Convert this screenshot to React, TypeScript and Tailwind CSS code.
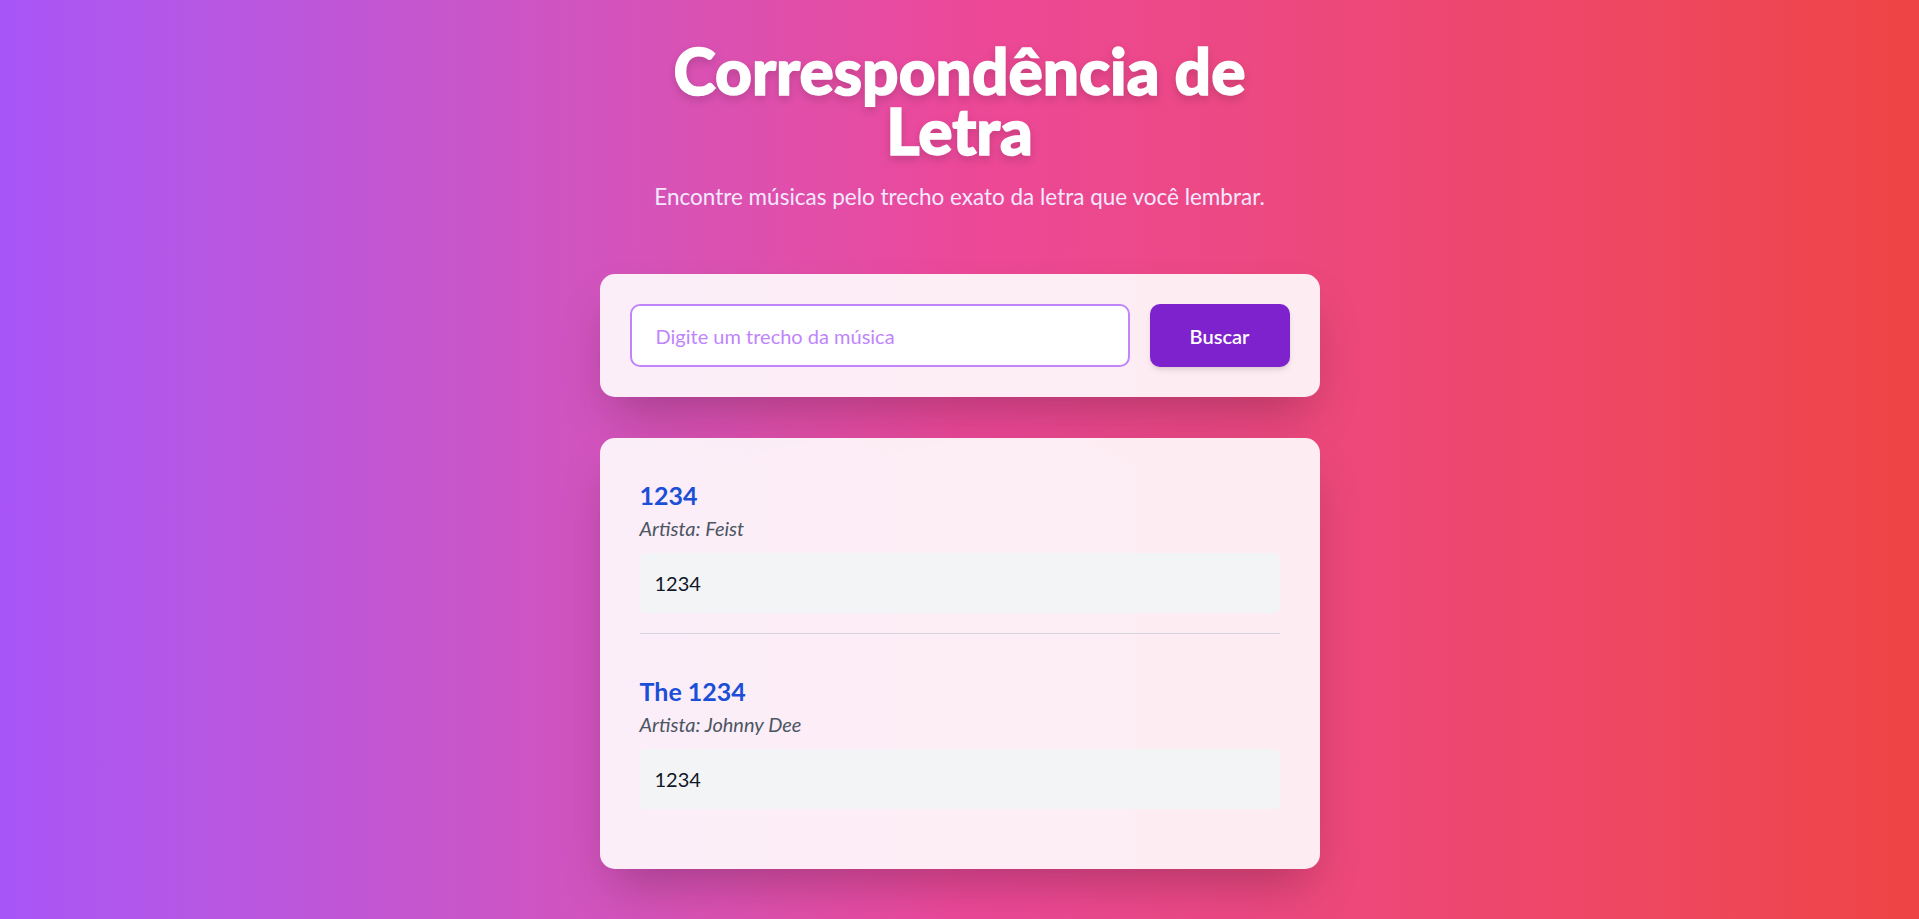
import { useState } from 'react';

const results = [
  { id: 1, title: '1234', artist: 'Feist', lyric: '1234' },
  { id: 2, title: 'The 1234', artist: 'Johnny Dee', lyric: '1234' },
];

export default function App() {
  const [query, setQuery] = useState('');

  return (
    <div className="min-h-screen bg-linear-to-r from-[#a855f7] via-[#ec4899] to-[#ef4444] pt-[41px] pb-10 px-4 font-['Lato',sans-serif]">
      <div className="max-w-[720px] mx-auto">
        <header className="text-center mb-[60px]">
          <h1 className="max-w-[620px] mx-auto text-[64px] leading-[60px] font-black text-white [-webkit-text-stroke:1.5px_white] drop-shadow-lg">
            Correspondência de Letra
          </h1>
          <p className="mt-[18px] text-[22.5px] leading-[35px] text-[#f3e8ff]">
            Encontre músicas pelo trecho exato da letra que você lembrar.
          </p>
        </header>

        <form
          className="flex gap-5 p-[30px] bg-white/90 rounded-[15px] shadow-2xl"
          onSubmit={(e) => e.preventDefault()}
        >
          <input
            type="text"
            value={query}
            onChange={(e) => setQuery(e.target.value)}
            placeholder="Digite um trecho da música"
            className="flex-1 h-[63px] px-[24px] bg-white border-2 border-[#c084fc] rounded-[10px] text-[20px] text-gray-800 placeholder:text-[#c084fc] outline-none"
          />
          <button
            type="submit"
            className="w-[140px] h-[63px] bg-[#7e22ce] text-white text-[20px] font-semibold rounded-[10px] shadow-md hover:bg-[#6b21a8] transition-colors"
          >
            Buscar
          </button>
        </form>

        <div className="mt-[41px] p-10 bg-white/90 rounded-[15px] shadow-2xl flex flex-col gap-10">
          {results.map((r) => (
            <div key={r.id} className="pb-5 border-b border-[#d1d5db] last:border-b-0">
              <h3 className="text-[25px] leading-[35px] font-bold text-[#1d4ed8]">{r.title}</h3>
              <p className="text-[20px] leading-[30px] italic text-[#4b5563]">Artista: {r.artist}</p>
              <div className="mt-[10px] p-[15px] bg-[#f3f4f6] rounded-md text-[20px] leading-[30px] text-[#111827]">
                {r.lyric}
              </div>
            </div>
          ))}
        </div>
      </div>
    </div>
  );
}
